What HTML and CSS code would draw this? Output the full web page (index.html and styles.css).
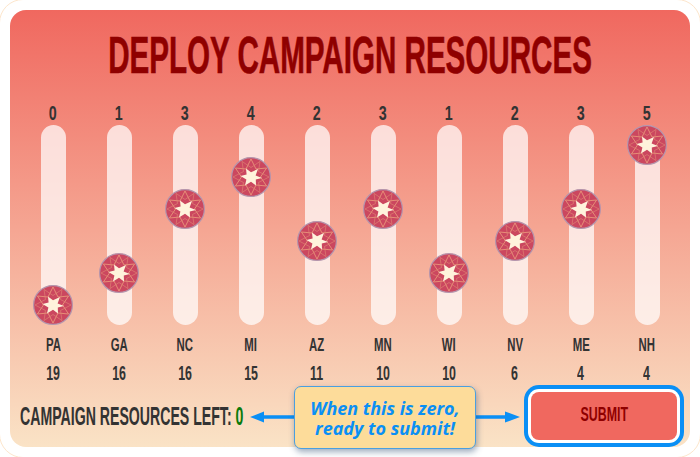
FILE: index.html
```html
<!DOCTYPE html>
<html>
<head>
    <title>Deploy Campaign Resources</title>
    <link rel="stylesheet" href="styles.css">
</head>
<body>
<svg class="defs" width="0" height="0">
    <symbol id="badge" viewBox="0 0 40 40">
        <circle cx="20" cy="20" r="19.4" fill="#cb475f" stroke="#b596ad" stroke-width="1.2"/>
        <polygon points="20,2 25,12 35.6,11 29.5,20 35.6,29 25,28 20,38 15,28 4.4,29 10.5,20 4.4,11 15,12" fill="none" stroke="#ec9f7e" stroke-width="0.8"/>
        <polygon points="29,4.4 27.5,14.5 38,20 27.5,25.5 29,35.6 20,29.5 11,35.6 12.5,25.5 2,20 12.5,14.5 11,4.4 20,10.500" fill="none" stroke="#e08a76" stroke-width="0.6"/>
        <polygon points="27,12 24.600,18.400 31,21 24.800,22.500 25,28.500 20,24.800 14,28.500 15.400,22.400 9.500,19 15.600,17.600 15,11.500 20,15.200" fill="#fff3dc"/>
    </symbol>
</svg>
<div class="frame">
    <main class="panel">
        <h1><span>Deploy Campaign Resources</span></h1>
        <div class="sliders">
            <div class="col"><div class="value"><span>0</span></div><div class="track"><svg class="thumb" style="top:160px"><use href="#badge"/></svg></div><div class="state"><span>PA</span></div><div class="votes"><span>19</span></div></div>
            <div class="col"><div class="value"><span>1</span></div><div class="track"><svg class="thumb" style="top:128px"><use href="#badge"/></svg></div><div class="state"><span>GA</span></div><div class="votes"><span>16</span></div></div>
            <div class="col"><div class="value"><span>3</span></div><div class="track"><svg class="thumb" style="top:64px"><use href="#badge"/></svg></div><div class="state"><span>NC</span></div><div class="votes"><span>16</span></div></div>
            <div class="col"><div class="value"><span>4</span></div><div class="track"><svg class="thumb" style="top:32px"><use href="#badge"/></svg></div><div class="state"><span>MI</span></div><div class="votes"><span>15</span></div></div>
            <div class="col"><div class="value"><span>2</span></div><div class="track"><svg class="thumb" style="top:96px"><use href="#badge"/></svg></div><div class="state"><span>AZ</span></div><div class="votes"><span>11</span></div></div>
            <div class="col"><div class="value"><span>3</span></div><div class="track"><svg class="thumb" style="top:64px"><use href="#badge"/></svg></div><div class="state"><span>MN</span></div><div class="votes"><span>10</span></div></div>
            <div class="col"><div class="value"><span>1</span></div><div class="track"><svg class="thumb" style="top:128px"><use href="#badge"/></svg></div><div class="state"><span>WI</span></div><div class="votes"><span>10</span></div></div>
            <div class="col"><div class="value"><span>2</span></div><div class="track"><svg class="thumb" style="top:96px"><use href="#badge"/></svg></div><div class="state"><span>NV</span></div><div class="votes"><span>6</span></div></div>
            <div class="col"><div class="value"><span>3</span></div><div class="track"><svg class="thumb" style="top:64px"><use href="#badge"/></svg></div><div class="state"><span>ME</span></div><div class="votes"><span>4</span></div></div>
            <div class="col"><div class="value"><span>5</span></div><div class="track"><svg class="thumb" style="top:0"><use href="#badge"/></svg></div><div class="state"><span>NH</span></div><div class="votes"><span>4</span></div></div>
        </div>
        <div class="footer">
            <div class="left"><span>Campaign Resources Left: <b class="zero">0</b></span></div>
            <button class="submit"><span>Submit</span></button>
        </div>
    </main>

    <!-- annotation drawn over the page -->
    <svg class="arrows" width="700" height="457">
        <path d="M262 417H294M476 417H510" stroke="#0a8ff5" stroke-width="3.500" fill="none"/>
        <polygon points="250,417 264,411.500 264,422.500" fill="#0a8ff5"/>
        <polygon points="520,417 505,411.500 505,422.500" fill="#0a8ff5"/>
    </svg>
    <div class="callout">When this is zero,<br>ready to submit!</div>
</div>
</body>
</html>
```

FILE: styles.css
```css
html, body {
    margin: 0;
    background: #fff;
}

.defs {
    position: absolute;
}

.frame {
    position: relative;
    width: 700px;
    height: 457px;
    padding: 10px;
    box-sizing: border-box;
    overflow: hidden;
}

.frame::before {
    content: "";
    position: absolute;
    inset: -1px;
    border: 1px solid #fde6cc;
    border-radius: 24px;
}

.panel {
    position: relative;
    height: 437px;
    padding: 0 10px;
    box-sizing: border-box;
    border-radius: 16px;
    background: linear-gradient(#f0685f, #fae3c6);
    font-family: "Liberation Sans", sans-serif;
    font-weight: bold;
    color: #333;
    text-transform: uppercase;
}

/* no condensed font here, so squeeze the text sideways */
h1 span, .value span, .state span, .votes span, .left span, .submit span {
    display: inline-block;
    white-space: nowrap;
    transform: scaleX(0.62);
}

h1 {
    display: flex;
    justify-content: center;
    margin: 0;
    padding-top: 14px;
    height: 77px;
    box-sizing: border-box;
    font-size: 51px;
    line-height: 64px;
    color: #8f0000;
}

h1 span {
    transform: scaleX(0.58);
    -webkit-text-stroke: 0.6px #8f0000;
}

.sliders {
    display: grid;
    grid-template-columns: repeat(10, 66px);
    margin-top: 13px;
}

.col {
    display: flex;
    flex-direction: column;
    align-items: center;
}

.value {
    height: 25px;
    font-size: 21px;
    line-height: 25px;
}

.value span {
    transform: scaleX(0.68);
}

.track {
    position: relative;
    width: 25px;
    height: 200px;
    border-radius: 13px;
    background: rgba(255, 255, 255, 0.72);
}

.thumb {
    position: absolute;
    left: -7.5px;
    width: 40px;
    height: 40px;
}

.state, .votes {
    height: 29px;
    font-size: 19px;
    line-height: 29px;
}

.state span {
    transform: scaleX(0.6);
}

.votes {
    font-size: 20px;
}

.state {
    margin-top: 5px;
}

.footer {
    display: flex;
    justify-content: space-between;
    align-items: center;
    margin-top: 4px;
    padding-right: 3px;
}

.left {
    width: 224px;
    font-size: 25px;
    white-space: nowrap;
}

.left span {
    transform: scaleX(0.565);
    transform-origin: left center;
}

.zero {
    color: #0a7a0a;
}

.submit {
    width: 146px;
    height: 48px;
    padding: 0 0 3px;
    border: none;
    border-radius: 8px;
    background: #f0685f;
    box-shadow: 0 0 0 3px #fff, 0 0 0 7px #0a8ff5;
    font-family: inherit;
    font-size: 20px;
    font-weight: bold;
    text-transform: uppercase;
    color: #8f0000;
}

.arrows {
    position: absolute;
    left: 0;
    top: 0;
}

.callout {
    position: absolute;
    left: 294px;
    top: 386px;
    width: 182px;
    height: 63px;
    box-sizing: border-box;
    padding-top: 11px;
    border: 1px solid #4a9fe0;
    border-radius: 7px;
    background: #fddc9a;
    box-shadow: 1px 3px 6px rgba(40, 70, 110, 0.45);
    font-family: "Open Sans", sans-serif;
    font-size: 18px;
    line-height: 20px;
    font-style: italic;
    font-weight: bold;
    text-align: center;
    color: #0a8ff5;
}
```
